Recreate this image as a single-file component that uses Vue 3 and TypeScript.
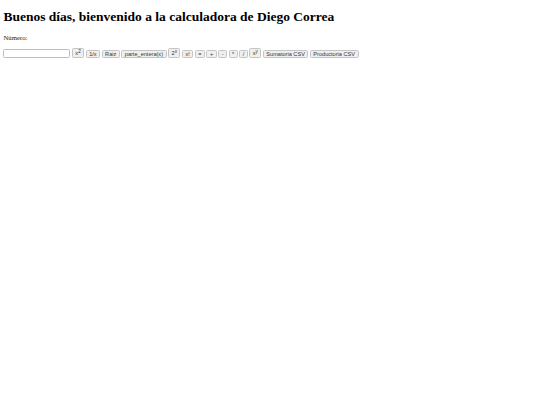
<script setup lang="ts">
const labels = ['1/x', 'Raiz', 'parte_entera(x)'];
const ops = ['x!', '=', '+', '-', '*', '/'];
</script>

<template>
  <main class="page">
    <h1>Buenos días, bienvenido a la calculadora de Diego Correa</h1>
    <p>Número:</p>
    <div class="row">
      <input type="text" />
      <button class="tall">x<sup>2</sup></button>
      <button v-for="l in labels" :key="l">{{ l }}</button>
      <button class="tall">2<sup>x</sup></button>
      <button v-for="o in ops" :key="o">{{ o }}</button>
      <button class="tall">x<sup>y</sup></button>
      <button>Sumatoria CSV</button>
      <button>Productoria CSV</button>
    </div>
  </main>
</template>

<style scoped>
.page {
  padding: 3.4px;
  font-family: "Liberation Serif", serif;
  color: #000;
}
h1 {
  font-size: 13.5px;
  line-height: 15.5px;
  font-weight: 700;
  margin: 6px 0 9px;
}
p {
  font-size: 6.75px;
  line-height: 8px;
  margin: 0 0 6px;
  color: #222;
}
.row {
  display: flex;
  align-items: flex-end;
  gap: 1.45px;
}
input {
  box-sizing: border-box;
  width: 67px;
  height: 9px;
  padding: 0 1px;
  border: 1px solid #bdbdbd;
  border-radius: 1.5px;
  background: #fff;
}
button {
  box-sizing: border-box;
  height: 8px;
  padding: 0 2.53px;
  border: 1px solid #c4c4c4;
  border-radius: 1.5px;
  background: #efefef;
  color: #333;
  font-family: "Liberation Sans", sans-serif;
  font-size: 5.6px;
  line-height: 6px;
}
button.tall {
  height: 10px;
}
sup {
  font-size: 4.6px;
  line-height: 0;
  vertical-align: 2px;
}
</style>
